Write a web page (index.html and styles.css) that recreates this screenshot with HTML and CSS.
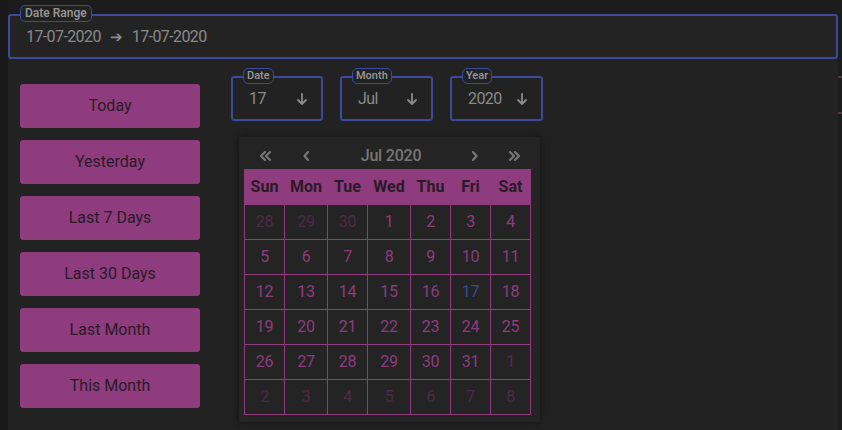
FILE: index.html
```html
<!DOCTYPE html>
<html>
<head>
<meta charset="utf-8">
<link rel="stylesheet" href="styles.css">
</head>
<body>
<div class="page">
  <div class="picker">
    <div class="range-field">
      <span class="field-label range-label">Date Range</span>
      <span class="range-date">17-07-2020</span>
      <span class="range-arrow">➔</span>
      <span class="range-date">17-07-2020</span>
    </div>
    <div class="panel">
      <div class="presets">
        <button class="preset">Today</button>
        <button class="preset">Yesterday</button>
        <button class="preset">Last 7 Days</button>
        <button class="preset">Last 30 Days</button>
        <button class="preset">Last Month</button>
        <button class="preset">This Month</button>
      </div>
      <div class="main">
        <div class="selects">
          <div class="select select-date">
            <span class="field-label">Date</span>
            <span class="value">17</span>
            <svg class="down" width="10" height="12" viewBox="0 0 10 12"><path d="M5 1V11M1 7L5 11L9 7" fill="none" stroke="#8a8a8a" stroke-width="1.8" stroke-linecap="round" stroke-linejoin="round"/></svg>
          </div>
          <div class="select">
            <span class="field-label">Month</span>
            <span class="value">Jul</span>
            <svg class="down" width="10" height="12" viewBox="0 0 10 12"><path d="M5 1V11M1 7L5 11L9 7" fill="none" stroke="#8a8a8a" stroke-width="1.8" stroke-linecap="round" stroke-linejoin="round"/></svg>
          </div>
          <div class="select">
            <span class="field-label">Year</span>
            <span class="value">2020</span>
            <svg class="down" width="10" height="12" viewBox="0 0 10 12"><path d="M5 1V11M1 7L5 11L9 7" fill="none" stroke="#8a8a8a" stroke-width="1.8" stroke-linecap="round" stroke-linejoin="round"/></svg>
          </div>
        </div>
        <div class="calendar">
          <div class="cal-nav">
            <span class="nav-btn"><svg width="13" height="10" viewBox="0 0 13 10"><path d="M6 1L2 5L6 9M11 1L7 5L11 9" fill="none" stroke="#777" stroke-width="2.2" stroke-linecap="round" stroke-linejoin="round"/></svg></span>
            <span class="nav-btn"><svg width="7" height="10" viewBox="0 0 7 10"><path d="M5 1L1.5 5L5 9" fill="none" stroke="#777" stroke-width="2.2" stroke-linecap="round" stroke-linejoin="round"/></svg></span>
            <span class="nav-title">Jul 2020</span>
            <span class="nav-btn"><svg width="7" height="10" viewBox="0 0 7 10"><path d="M2 1L5.5 5L2 9" fill="none" stroke="#777" stroke-width="2.2" stroke-linecap="round" stroke-linejoin="round"/></svg></span>
            <span class="nav-btn"><svg width="13" height="10" viewBox="0 0 13 10"><path d="M2 1L6 5L2 9M7 1L11 5L7 9" fill="none" stroke="#777" stroke-width="2.2" stroke-linecap="round" stroke-linejoin="round"/></svg></span>
          </div>
          <table class="cal-table">
            <colgroup>
              <col class="c40"><col class="c43"><col class="c40"><col class="c43"><col class="c40"><col class="c40"><col class="c40">
            </colgroup>
            <thead>
              <tr><th>Sun</th><th>Mon</th><th>Tue</th><th>Wed</th><th>Thu</th><th>Fri</th><th>Sat</th></tr>
            </thead>
            <tbody>
              <tr><td class="other">28</td><td class="other">29</td><td class="other">30</td><td>1</td><td>2</td><td>3</td><td>4</td></tr>
              <tr><td>5</td><td>6</td><td>7</td><td>8</td><td>9</td><td>10</td><td>11</td></tr>
              <tr><td>12</td><td>13</td><td>14</td><td>15</td><td>16</td><td class="selected">17</td><td>18</td></tr>
              <tr><td>19</td><td>20</td><td>21</td><td>22</td><td>23</td><td>24</td><td>25</td></tr>
              <tr><td>26</td><td>27</td><td>28</td><td>29</td><td>30</td><td>31</td><td class="other">1</td></tr>
              <tr><td class="other">2</td><td class="other">3</td><td class="other">4</td><td class="other">5</td><td class="other">6</td><td class="other">7</td><td class="other">8</td></tr>
            </tbody>
          </table>
        </div>
      </div>
    </div>
  </div>
  <div class="edge"><i class="edge-line"></i><i class="edge-line"></i></div>
</div>
</body>
</html>
```

FILE: styles.css
```css
* { box-sizing: border-box; }

body {
  margin: 0;
  background: #191919;
  font-family: Roboto, "Noto Sans", sans-serif;
  font-size: 16px;
}

.page {
  display: flex;
  height: 430px;
  overflow: hidden;
  padding-left: 8px;
}

.picker {
  width: 830px;
  display: flex;
  flex-direction: column;
  padding-top: 14px;
  background: linear-gradient(#1c1c1c, #1c1c1c) top / 100% 14px no-repeat;
}

.range-field {
  position: relative;
  height: 45px;
  flex: none;
  border: 2px solid #3b4a9c;
  border-radius: 3px;
  background: #232323;
  display: flex;
  align-items: center;
  gap: 9px;
  padding-left: 16px;
  color: #8a8a8a;
  font-size: 16px;
}

.range-date {
  letter-spacing: -0.6px;
}

.range-arrow {
  font-size: 15px;
  color: #8a8a8a;
}

.field-label {
  position: absolute;
  height: 17px;
  padding: 0 4px;
  border: 1px solid #3b4a9c;
  border-radius: 5px;
  background: #222;
  color: #999;
  font-size: 12px;
  line-height: 15px;
  font-weight: 500;
  letter-spacing: 0;
}

.range-label {
  top: -11px;
  left: 10px;
}

.panel {
  flex: 1;
  background: #222;
  display: flex;
  padding-left: 12px;
}

.presets {
  width: 180px;
  padding-top: 25px;
  display: flex;
  flex-direction: column;
  gap: 12px;
}

.preset {
  height: 44px;
  border: none;
  border-radius: 3px;
  background: #8e3c7d;
  color: #2a1a28;
  font-family: inherit;
  font-size: 16px;
  padding: 0 0 2px;
}

.main {
  margin-left: 31px;
  padding-top: 17px;
}

.selects {
  display: flex;
  gap: 17px;
}

.select {
  position: relative;
  width: 93px;
  height: 45px;
  border: 2px solid #3b4a9c;
  border-radius: 3px;
  display: flex;
  align-items: center;
  justify-content: space-between;
  padding: 0 14px 0 16px;
  color: #8a8a8a;
}

.select .value {
  letter-spacing: -0.6px;
}

.select-date { width: 92px; }

.select .field-label {
  top: -10px;
  left: 10px;
  height: 16px;
  line-height: 14px;
  font-size: 11px;
  padding: 0 3px;
}

.calendar {
  margin: 16px 0 0 8px;
  width: 301px;
  padding: 5px 9px 7px 5px;
  background: #242424;
  box-shadow: 0 0 8px rgba(0, 0, 0, 0.45);
}

.cal-nav {
  display: grid;
  grid-template-columns: 40px 43px 126px 40px 40px;
  height: 27px;
  align-items: center;
  justify-items: center;
  padding-left: 1px;
}

.nav-btn {
  display: flex;
}

.nav-title {
  color: #777;
  font-weight: 500;
  font-size: 16px;
  letter-spacing: -0.2px;
}

.cal-table {
  border-collapse: collapse;
  table-layout: fixed;
  width: 287px;
}

.c40 { width: 40px; }
.c43 { width: 43px; }

.cal-table th {
  height: 35px;
  background: #8e3c7d;
  color: #2a1a28;
  font-weight: 700;
  font-size: 16px;
  padding: 0 0 2px;
  border: 1px solid #8e3c7d;
}

.cal-table td {
  height: 35px;
  border: 1px solid #8e3c7d;
  text-align: center;
  color: #8e3c7d;
  padding: 0 0 1px;
  letter-spacing: -0.3px;
}

.cal-table td.other { color: #4f2a47; }
.cal-table td.selected { color: #3b4a9c; }

.edge {
  width: 4px;
  background: #1c1c1c;
  display: flex;
  flex-direction: column;
  padding-top: 76px;
  gap: 34px;
}

.edge-line {
  display: block;
  height: 2px;
  background: #5a2f52;
}
```
